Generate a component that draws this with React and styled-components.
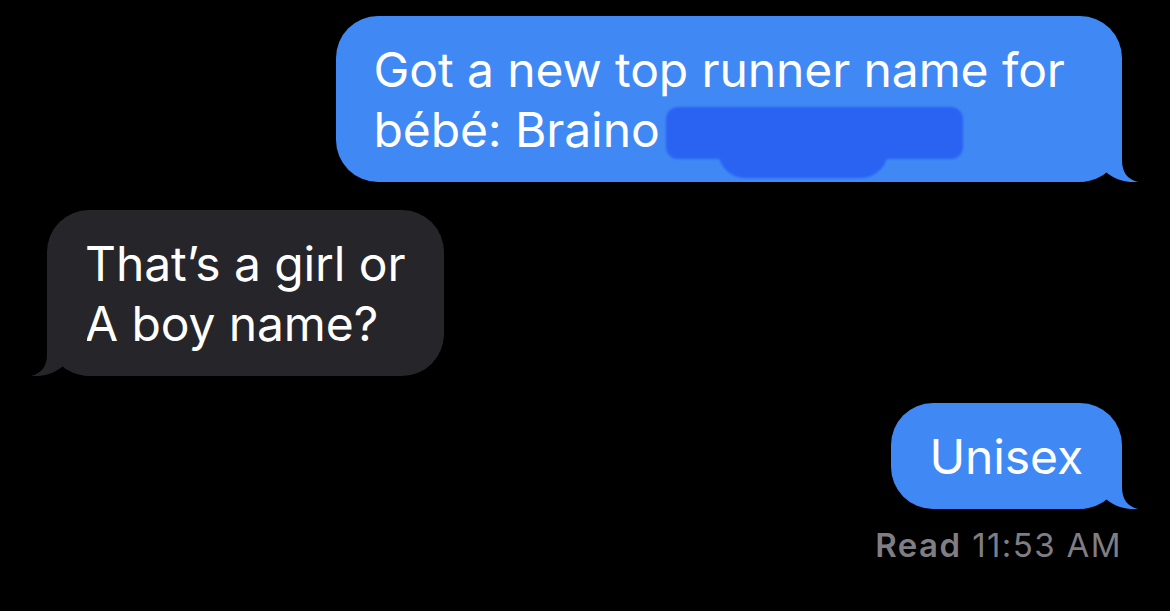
import React from "react";
import styled, { createGlobalStyle, css } from "styled-components";

const GlobalStyle = createGlobalStyle`
  html, body {
    margin: 0;
    padding: 0;
    background: #000;
  }
  body {
    font-family: Inter, "Noto Sans", "Liberation Sans", sans-serif;
    -webkit-font-smoothing: antialiased;
  }
`;

const Thread = styled.div`
  min-height: 100vh;
  background: #000;
  display: flex;
  flex-direction: column;
  padding: 16px 48px 0 47px;
  box-sizing: border-box;
`;

const Row = styled.div`
  display: flex;
  justify-content: ${({ $mine }) => ($mine ? "flex-end" : "flex-start")};
  margin-top: ${({ $gap }) => $gap || 0}px;
`;

const Bubble = styled.div`
  position: relative;
  padding: 24px 39px 22px 38px;
  border-radius: 42px;
  font-size: 48px;
  line-height: 60px;
  letter-spacing: -0.1px;
  color: #fff;
  ${({ $mine }) =>
    $mine
      ? css`
          background: #4089f5;
        `
      : css`
          background: #262529;
        `}
`;

const Tail = styled.svg`
  position: absolute;
  bottom: 0;
  width: 56px;
  height: 44px;
  ${({ $mine }) =>
    $mine
      ? css`
          right: -16px;
        `
      : css`
          left: -16px;
          transform: scaleX(-1);
        `}
`;

/* blurred scribble hiding the rest of the name */
const Redaction = styled.span`
  position: relative;
  display: inline-block;
  width: 297px;
  height: 52px;
  margin: 0 120px 0 -7px;
  vertical-align: -12px;
  border-radius: 12px;
  background: #2a63f2;
  filter: blur(1.2px);

  &::after {
    content: "";
    position: absolute;
    left: 52px;
    top: 44px;
    width: 170px;
    height: 27px;
    border-radius: 0 0 30px 30px;
    background: #2a63f2;
  }
`;

const Receipt = styled.div`
  align-self: flex-end;
  margin-top: 16px;
  margin-right: 0;
  font-size: 33px;
  line-height: 40px;
  color: #7f7e84;
  letter-spacing: 1.4px;

  b {
    font-weight: 600;
  }
`;

const BubbleTail = ({ mine }) => (
  <Tail $mine={mine} viewBox="0 0 56 44">
    <path
      d="M0 0 H40 V22 C40 34 45 41 56 44 C46 45 30 42 20 30 C16 38 8 43 0 44 Z"
      fill={mine ? "#4089f5" : "#262529"}
    />
  </Tail>
);

const Message = ({ mine, gap, children }) => (
  <Row $mine={mine} $gap={gap}>
    <Bubble $mine={mine}>
      {children}
      <BubbleTail mine={mine} />
    </Bubble>
  </Row>
);

export default function App() {
  return (
    <>
      <GlobalStyle />
      <Thread>
        <Message mine>
          Got a new top runner name for
          <br />
          bébé: Braino <Redaction />
        </Message>
        <Message gap={28}>
          That’s a girl or
          <br />A boy name?
        </Message>
        <Message mine gap={27}>
          Unisex
        </Message>
        <Receipt>
          <b>Read</b> 11:53 AM
        </Receipt>
      </Thread>
    </>
  );
}
